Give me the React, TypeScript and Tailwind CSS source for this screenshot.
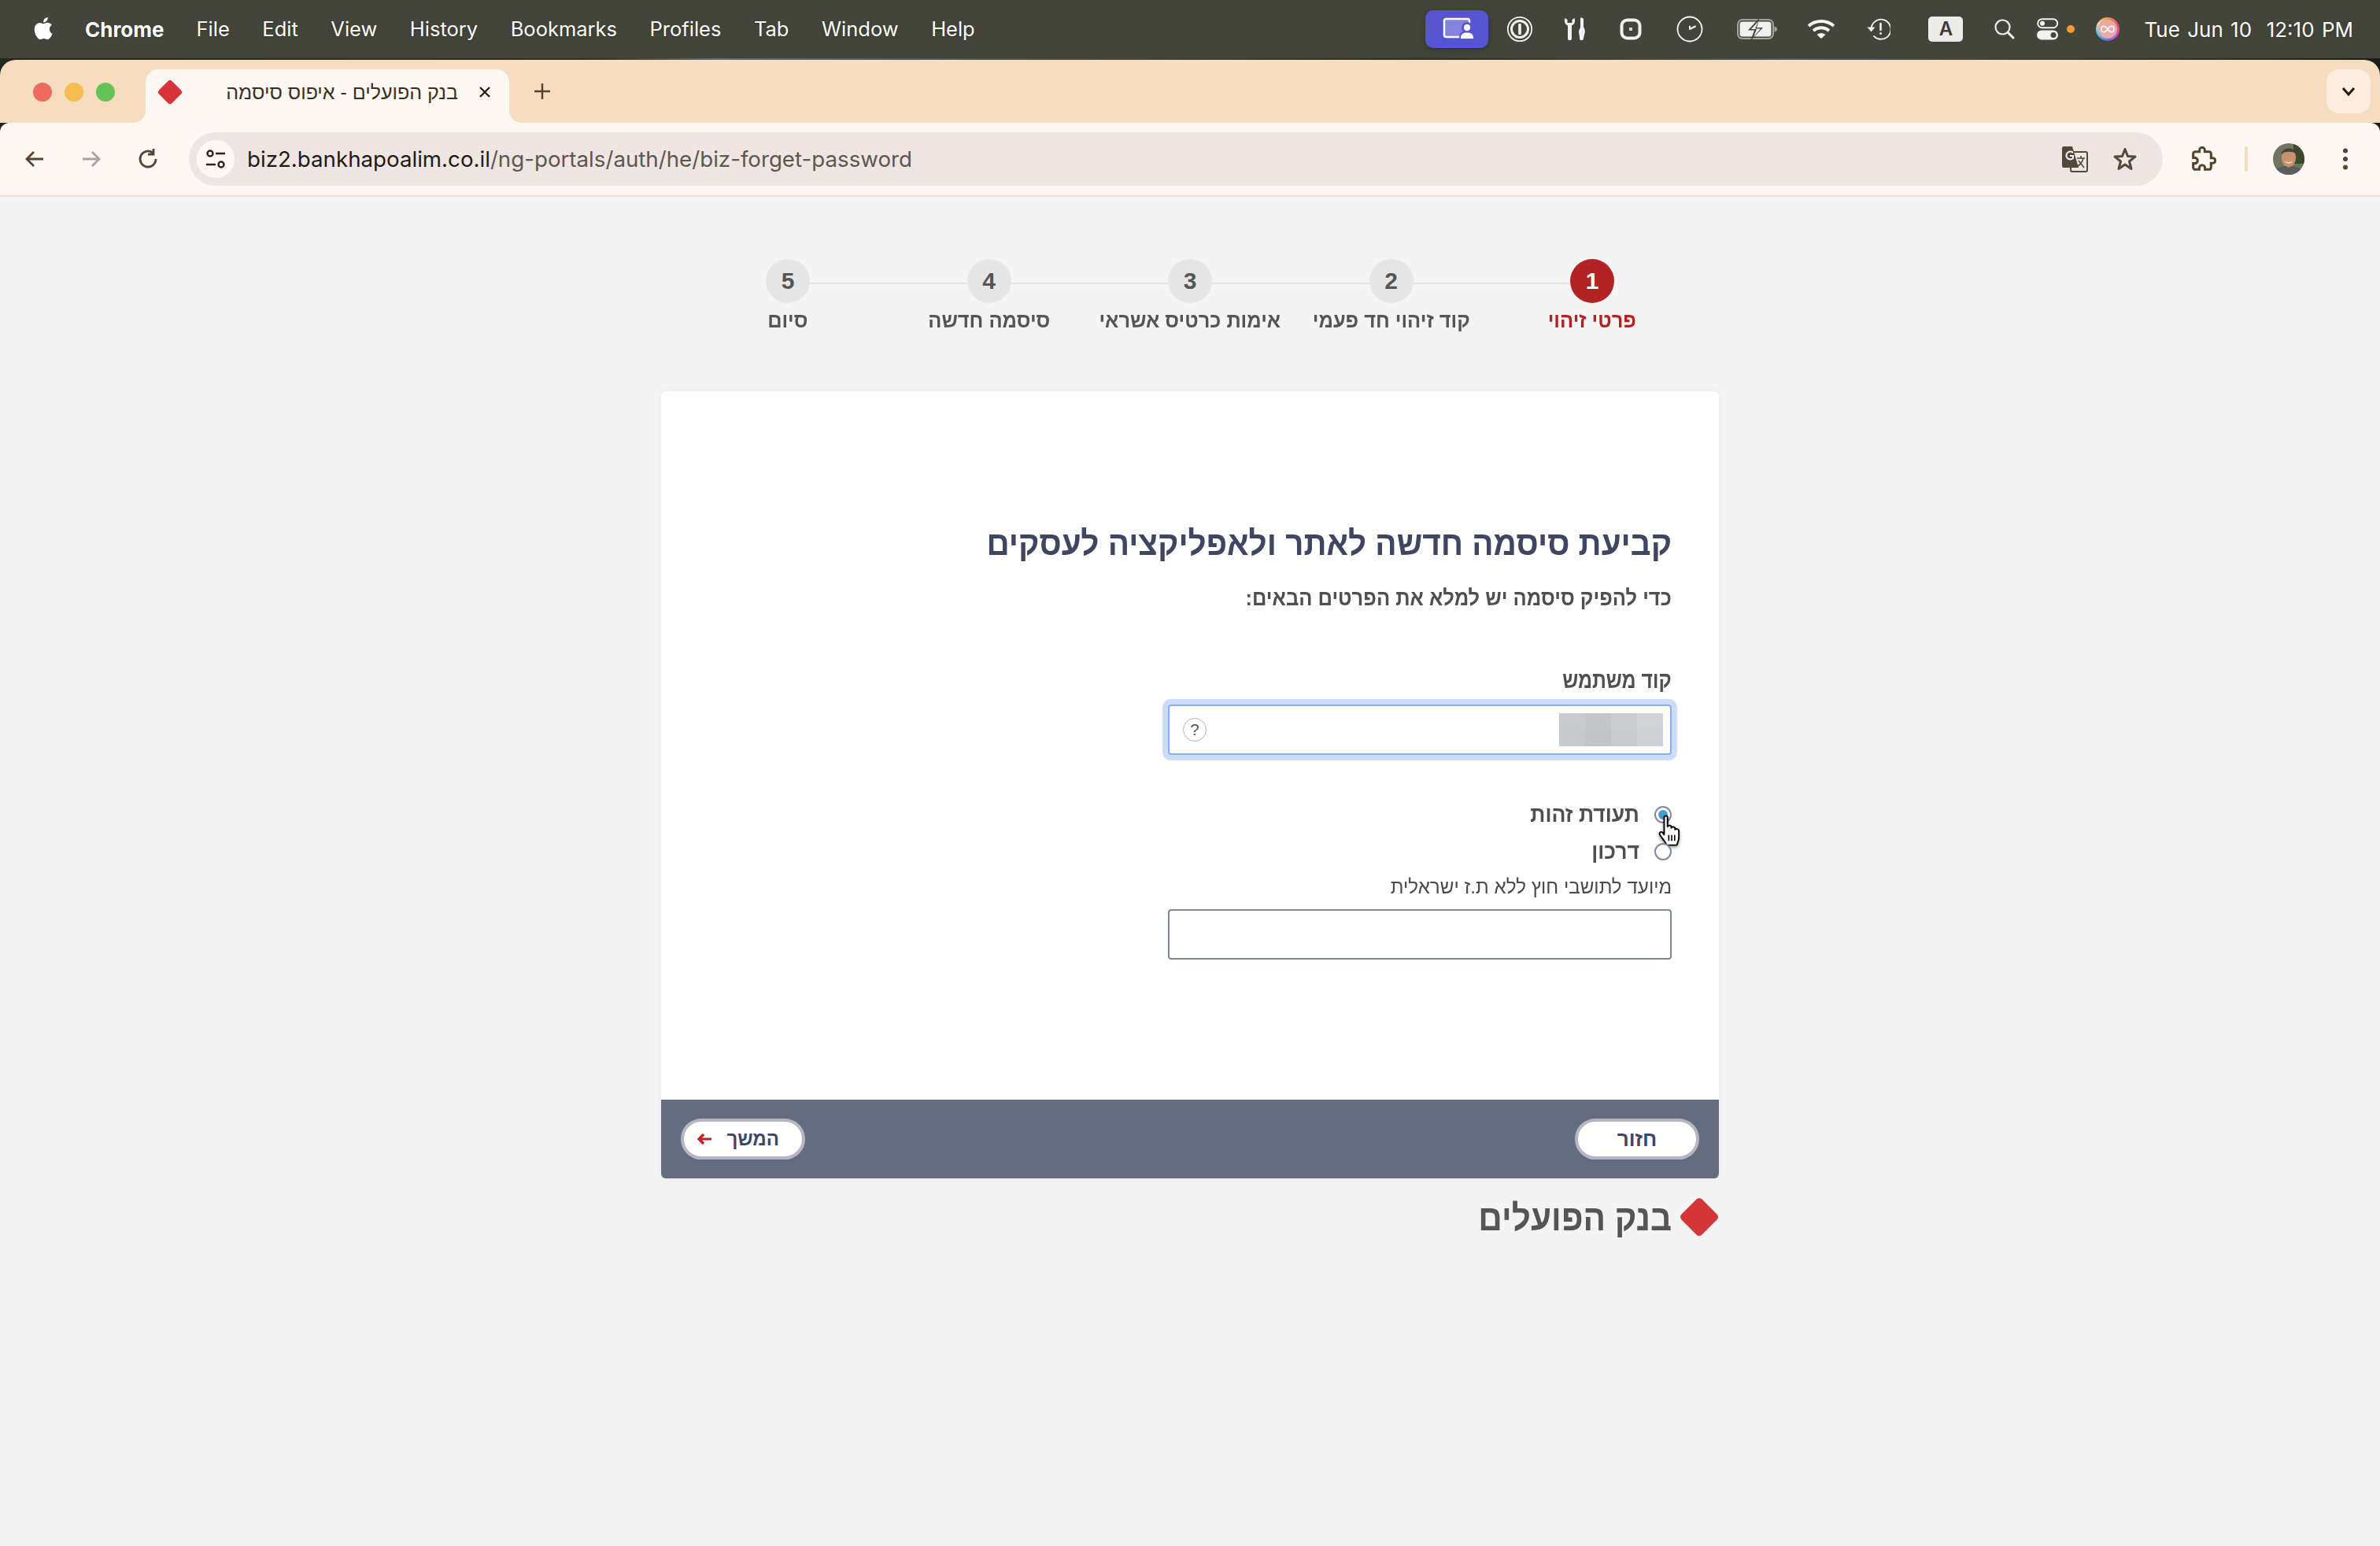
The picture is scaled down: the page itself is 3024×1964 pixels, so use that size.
const Diamond = ({ s, cls = "" }: { s: number; cls?: string }) => (
  <svg width={s} height={s} viewBox="0 0 50 50" className={cls}>
    <path d="M21.5 2.5 Q25 -0.5 28.5 2.5 L47.5 21.5 Q50.5 25 47.5 28.5 L28.5 47.5 Q25 50.5 21.5 47.5 L2.5 28.5 Q-0.5 25 2.5 21.5 Z" fill="#d43535" />
  </svg>
);

const Apple = () => (
  <svg width="28" height="34" viewBox="0 0 24 29" fill="#fff">
    <path d="M19.6 15.3c0-3 2.4-4.400 2.600-4.500-1.400-2.100-3.600-2.400-4.400-2.400-1.900-.2-3.600 1.100-4.600 1.100-.9 0-2.400-1.100-4-1.100-2 0-3.900 1.200-5 3-2.100 3.700-.5 9.200 1.500 12.200 1 1.500 2.200 3.100 3.800 3 1.500-.1 2.100-1 3.900-1 1.800 0 2.400 1 4 1 1.700 0 2.700-1.500 3.700-2.900 1.200-1.700 1.600-3.300 1.700-3.400-.1 0-3.200-1.300-3.200-5zM16.500 6.300c.8-1 1.400-2.400 1.200-3.800-1.200.1-2.600.8-3.500 1.800-.8.900-1.400 2.300-1.200 3.700 1.300.1 2.700-.7 3.500-1.700z" />
  </svg>
);

const Pill = () => (
  <div className="w-[80px] h-[48px] rounded-[10px] bg-[#5754d2] shadow-[0_2px_6px_rgba(0,0,0,0.3)]">
    <svg width="80" height="48" viewBox="0 0 80 48">
      <rect x="24" y="11" width="32" height="23" rx="2.500" fill="#8583e0" stroke="#fff" strokeWidth="2.500" />
      <circle cx="53" cy="22" r="7" fill="#5754d2" />
      <circle cx="53" cy="22" r="4.200" fill="#fff" />
      <path d="M44 36 C44 29 47 27.500 53 27.500 C59 27.500 61 29 61 36 Z" fill="#5754d2" stroke="#5754d2" strokeWidth="2" />
      <path d="M45 36 C45 30 48 28.500 53 28.500 C58 28.500 61 30 61 36 Z" fill="#fff" />
    </svg>
  </div>
);

const OneP = () => (
  <svg width="34" height="34" viewBox="0 0 34 34" fill="none" stroke="#f1f1ef">
    <circle cx="17" cy="17" r="15.200" strokeWidth="1.800" />
    <circle cx="17" cy="17" r="10.500" strokeWidth="3" />
    <rect x="15.200" y="10" width="3.600" height="14" rx="1" fill="#f1f1ef" stroke="none" />
  </svg>
);

const Tools = () => (
  <svg width="30" height="30" viewBox="0 0 30 30" fill="#f1f1ef">
    <path d="M1.500 1 C0 5 1.500 9 5 10.500 V27 C5 30 10 30 10 27 V10.500 C13.500 9 15 5 13.500 1 L10.500 3 V7 H4.500 V3 Z" />
    <path d="M21 0.500 C23.500 0.500 25 1 25 3 V12 C27 16 27.500 18 26 22 L25 27 C24.500 30 20 30 20 27 C20.500 24 19 22 19 18 C19 16 21 14 21 12 Z" />
  </svg>
);

const SquareDot = () => (
  <svg width="28" height="28" viewBox="0 0 28 28" fill="none">
    <rect x="2.500" y="2.500" width="23" height="23" rx="7" stroke="#f1f1ef" strokeWidth="4" />
    <rect x="12" y="12" width="4" height="4" fill="#d8d8d4" />
  </svg>
);

const Clock = () => (
  <svg width="34" height="34" viewBox="0 0 34 34" fill="none" stroke="#f6f6f4" strokeLinecap="round">
    <circle cx="17" cy="17" r="15.500" strokeWidth="1.800" />
    <path d="M17 17 V13.500 M17 17 L24 13.500" strokeWidth="2" />
  </svg>
);

const Battery = () => (
  <svg width="52" height="26" viewBox="0 0 52 26">
    <rect x="1" y="1" width="45" height="24" rx="6" fill="none" stroke="#a3a49a" strokeWidth="2" />
    <rect x="3.500" y="3.500" width="40" height="19" rx="3.500" fill="#f0f0ee" />
    <path d="M47.500 9.500 C50 10 51 11.500 51 13 C51 14.500 50 16 47.500 16.500 Z" fill="#a3a49a" />
    <path d="M29 -2 L14 14.500 H22 L17 28 L33 11 H25 Z" fill="#44463a" />
    <path d="M27 3 L18 13 H25 L21 23 L30 12.500 H23 Z" fill="#f0f0ee" />
  </svg>
);

const Wifi = () => (
  <svg width="36" height="26" viewBox="0 0 36 26" fill="none" stroke="#f6f6f4" strokeWidth="3.800">
    <path d="M2 9 C11 1 25 1 34 9" />
    <path d="M8 15 C14 10 22 10 28 15" />
    <path d="M18 25 L12.500 20 C15.500 17.500 20.500 17.500 23.500 20 Z" fill="#f6f6f4" stroke="none" />
  </svg>
);

const Backup = () => (
  <svg width="30" height="28" viewBox="0 0 30 28" fill="none" stroke="#f1f1ef">
    <path d="M5.500 13 A12.500 12.500 0 1 1 9 23" strokeWidth="1.800" strokeLinecap="round" />
    <path d="M0.500 11.500 H10.500 L5.500 17.500 Z" fill="#f1f1ef" stroke="none" />
    <path d="M17.500 7 V15" strokeWidth="2.600" strokeLinecap="round" />
    <circle cx="17.500" cy="19.500" r="1.500" fill="#f1f1ef" stroke="none" />
  </svg>
);

const Search = () => (
  <svg width="26" height="26" viewBox="0 0 26 26" fill="none" stroke="#f1f1ef" strokeLinecap="round">
    <circle cx="10.500" cy="10.500" r="9" strokeWidth="2.200" />
    <path d="M17.500 17.500 L24 24" strokeWidth="3" />
  </svg>
);

const Control = () => (
  <svg width="28" height="28" viewBox="0 0 28 28">
    <rect x="1.200" y="1.200" width="25" height="11" rx="5.500" fill="none" stroke="#f1f1ef" strokeWidth="2" />
    <circle cx="7" cy="6.700" r="3" fill="#f1f1ef" />
    <rect x="0" y="15.500" width="27" height="12" rx="6" fill="#f1f1ef" />
    <circle cx="21" cy="21.500" r="3.500" fill="#44463a" />
  </svg>
);

const Siri = () => (
  <div className="w-[30px] h-[30px] rounded-full bg-[conic-gradient(#f0a040,#f04f68,#d84cc8,#5f70f0,#4cc0ee,#e0d0a8,#f0a040)] flex items-center justify-center">
    <div className="w-[24px] h-[24px] rounded-full bg-[#e9a9a4] flex items-center justify-center">
      <svg width="20" height="14" viewBox="0 0 20 14" fill="none" stroke="#fff" strokeWidth="1.500">
        <path d="M10 7 C7 2 2 2 2 7 C2 12 7 12 10 7 C13 2 18 2 18 7 C18 12 13 12 10 7 Z" />
      </svg>
    </div>
  </div>
);

const Tab = () => (
  <div className="relative w-[462px] h-[68px] ml-[39px] pb-[10px] bg-[#fef8f3] rounded-t-[16px] flex items-center text-[#3b2f25]">
    <svg width="16" height="16" viewBox="0 0 16 16" className="absolute left-[-16px] bottom-0">
      <path d="M16 0 V16 H0 C9 16 16 9 16 0 Z" fill="#fef8f3" />
    </svg>
    <svg width="16" height="16" viewBox="0 0 16 16" className="absolute right-[-16px] bottom-0">
      <path d="M0 0 V16 H16 C7 16 0 9 0 0 Z" fill="#fef8f3" />
    </svg>
    <svg width="32" height="32" viewBox="0 0 32 32" className="ml-[15px] shrink-0">
      <path d="M14 1.500 Q16 0 18 1.500 L30.500 14 Q32 16 30.500 18 L18 30.500 Q16 32 14 30.500 L1.500 18 Q0 16 1.500 14 Z" fill="#d8323a" />
    </svg>
    <div dir="rtl" className="ml-[57px] w-[293px] text-[25px] leading-[30px] whitespace-nowrap font-['Liberation_Sans',sans-serif]">
      בנק הפועלים - איפוס סיסמה
    </div>
    <svg width="18" height="18" viewBox="0 0 18 18" className="ml-[25px]" stroke="#2a2119" strokeWidth="2.400" fill="none">
      <path d="M3 3 L15 15 M15 3 L3 15" />
    </svg>
  </div>
);

const ToolIcon = ({ d, cls = "", color = "#54432f" }: { d: string; cls?: string; color?: string }) => (
  <svg width="32" height="32" viewBox="0 0 32 32" fill="none" stroke={color} strokeWidth="2.800" className={cls}>
    <path d={d} />
  </svg>
);

const Browser = () => (
  <div className="bg-[linear-gradient(90deg,#1f2a1c,#3a2c1e_25%,#5a6c78_30%,#2a2a20_60%,#4a5860_75%,#1c1c16)] pt-[2px]">
    <div className="h-[80px] bg-[#f6ddbf] rounded-t-[20px] flex items-end relative">
      <div className="flex items-center gap-[16px] ml-[42px] h-[80px] pt-[2px]">
        <div className="w-[24px] h-[24px] rounded-full bg-[#ee6a5f]" />
        <div className="w-[24px] h-[24px] rounded-full bg-[#f5bd4f]" />
        <div className="w-[24px] h-[24px] rounded-full bg-[#61c454]" />
      </div>
      <Tab />
      <svg width="24" height="24" viewBox="0 0 24 24" stroke="#54432f" strokeWidth="2.400" className="ml-[30px] mb-[28px]">
        <path d="M12 2 V22 M2 12 H22" />
      </svg>
      <div className="ml-auto mr-[12px] mb-[12px] w-[56px] h-[56px] rounded-[16px] bg-[#fbeee0] flex items-center justify-center">
        <svg width="18" height="12" viewBox="0 0 18 12" fill="none" stroke="#241b12" strokeWidth="3">
          <path d="M2 2 L9 10 L16 2" />
        </svg>
      </div>
    </div>
    <div className="h-[92px] bg-[#fef8f3] rounded-t-[12px] flex items-center relative">
      <ToolIcon cls="ml-[28px]" d="M27 16 H6 M15 7 L6 16 L15 25" />
      <ToolIcon cls="ml-[40px]" color="#aaa49c" d="M5 16 H26 M17 7 L26 16 L17 25" />
      <ToolIcon cls="ml-[40px]" d="M26 16 A10 10 0 1 1 22 8 M23 3 V10 H16" />
      <div className="ml-[36px] w-[2508px] h-[68px] rounded-full bg-[#efe6e3] flex items-center">
        <div className="ml-[10px] w-[48px] h-[48px] rounded-full bg-[#fef8f3] flex items-center justify-center">
          <svg width="26" height="26" viewBox="0 0 26 26" fill="none" stroke="#2d241b" strokeWidth="2.400">
            <circle cx="6" cy="6" r="3.500" />
            <path d="M13 6 H25 M1 20 H13" />
            <circle cx="20" cy="20" r="3.500" />
          </svg>
        </div>
        <div className="ml-[16px] text-[27.7px] leading-[36px] text-[#1f1a16] font-['Inter',sans-serif] whitespace-nowrap">
          biz2.bankhapoalim.co.il<span className="text-[#5f5650]">/ng-portals/auth/he/biz-forget-password</span>
        </div>
        <svg width="34" height="34" viewBox="0 0 34 34" className="ml-auto">
          <rect x="12" y="8" width="21" height="25" rx="2" fill="none" stroke="#54473b" strokeWidth="2" />
          <path d="M3 1 H14 L22 28 H3 Q1 28 1 26 V3 Q1 1 3 1 Z" fill="#54473b" />
          <path d="M15 9 A5 5 0 1 0 15 16 V13 H11" fill="none" stroke="#fff" strokeWidth="2" />
          <path d="M20 16 H30 M25 13 V16 M28 16 C27 21 24 24 21 26 M22 19 L29 28" fill="none" stroke="#54473b" strokeWidth="1.600" />
        </svg>
        <svg width="32" height="32" viewBox="0 0 32 32" fill="none" stroke="#54473b" strokeWidth="3" className="ml-[31px] mr-[32px]">
          <path d="M16 3.500 L19.500 12.500 L29 13 L21.500 19 L24 28.500 L16 23 L8 28.500 L10.500 19 L3 13 L12.500 12.500 Z" strokeLinejoin="round" />
        </svg>
      </div>
      <svg width="32" height="32" viewBox="0 0 24 24" fill="none" stroke="#54432f" strokeWidth="2.300" className="ml-[36px]">
        <path d="M20.500 11H19V7c0-1.100-.9-2-2-2h-4V3.500C13 2.120 11.880 1 10.500 1S8 2.120 8 3.500V5H4c-1.100 0-1.990.9-1.990 2v3.800H3.500c1.490 0 2.700 1.210 2.700 2.700s-1.210 2.700-2.700 2.700H2V20c0 1.100.9 2 2 2h3.800v-1.500c0-1.490 1.210-2.700 2.700-2.700 1.490 0 2.700 1.210 2.700 2.700V22H17c1.100 0 2-.9 2-2v-4h1.500c1.380 0 2.500-1.120 2.500-2.500S21.880 11 20.500 11z" />
      </svg>
      <div className="ml-[36px] w-[4px] h-[32px] rounded-full bg-[#f6ddbf]" />
      <svg width="40" height="40" viewBox="0 0 40 40" className="ml-[32px] rounded-full">
        <rect width="40" height="40" fill="#6f7660" />
        <rect x="26" y="0" width="14" height="26" fill="#3c4a2c" />
        <path d="M11 18 C10 6 30 6 29 18 C29 26 25 30 20 30 C15 30 11 26 11 18 Z" fill="#c8926f" />
        <path d="M11 15 C10 4 30 4 29 13 C25 10 16 10 12 13 Z" fill="#4c4038" />
        <path d="M15 22 C18 25 22 25 25 22 L24 24 C21 26 19 26 16 24 Z" fill="#f4ead8" />
        <path d="M0 40 V36 C6 30 12 30 16 29 L20 32 L24 29 C28 30 34 30 40 36 V40 Z" fill="#5b5c5f" />
      </svg>
      <svg width="8" height="28" viewBox="0 0 8 28" fill="#54432f" className="ml-[48px]">
        <circle cx="4" cy="3.500" r="3" />
        <circle cx="4" cy="14" r="3" />
        <circle cx="4" cy="24.500" r="3" />
      </svg>
    </div>
    <div className="h-[2px] bg-[#f2e0d2]" />
  </div>
);

const MenuBar = () => (
  <div className="h-[74px] bg-[#44453a] flex items-center text-white font-['Inter',sans-serif] text-[26px] [text-shadow:0_1px_3px_rgba(0,0,0,0.3)]">
    <div className="ml-[40px] mb-[2px]"><Apple /></div>
    <div className="ml-[40px] font-bold">Chrome</div>
    <div className="ml-[41px] flex gap-[41.500px] text-[25.500px]">
      <span>File</span>
      <span>Edit</span>
      <span>View</span>
      <span>History</span>
      <span>Bookmarks</span>
      <span>Profiles</span>
      <span>Tab</span>
      <span>Window</span>
      <span>Help</span>
    </div>
    <div className="ml-auto flex items-center mr-[34px]">
      <Pill />
      <div className="ml-[23px]"><OneP /></div>
      <div className="ml-[39px]"><Tools /></div>
      <div className="ml-[41px]"><SquareDot /></div>
      <div className="ml-[44px]"><Clock /></div>
      <div className="ml-[43px]"><Battery /></div>
      <div className="ml-[37px]"><Wifi /></div>
      <div className="ml-[40px]"><Backup /></div>
      <div className="ml-[48px] w-[44px] h-[32px] rounded-[5px] bg-[#ececea] text-[#3d3d3a] text-[24px] font-semibold flex items-center justify-center [text-shadow:none]">A</div>
      <div className="ml-[40px]"><Search /></div>
      <div className="ml-[28px]"><Control /></div>
      <div className="ml-[10px] w-[10px] h-[10px] rounded-full bg-[#f29c38]" />
      <div className="ml-[27px]"><Siri /></div>
      <div className="ml-[31px] whitespace-pre [word-spacing:2px]">Tue Jun 10  12:10 PM</div>
    </div>
  </div>
);

const steps = ["פרטי זיהוי", "קוד זיהוי חד פעמי", "אימות כרטיס אשראי", "סיסמה חדשה", "סיום"];

const Stepper = () => (
  <div dir="rtl" className="h-[247px] pt-[79px] flex flex-col items-center">
    <div className="w-[1078px] flex items-center">
      {steps.map((_, i) => (
        <div key={i} className="contents">
          <div className={i === 0 ? "w-[56px] h-[56px] pb-[2px] shrink-0 rounded-full bg-[#b12325] text-white flex items-center justify-center text-[30px] font-bold" : "w-[56px] h-[56px] pb-[2px] shrink-0 rounded-full bg-[#e6e6e6] text-[#555] flex items-center justify-center text-[30px] font-bold"}>
            {i + 1}
          </div>
          {i < 4 && <div className="flex-1 h-[2px] mt-[5px] bg-[#e4e4e4]" />}
        </div>
      ))}
    </div>
    <div className="w-[1278px] grid grid-cols-5 mt-[4px]">
      {steps.map((s, i) => (
        <div key={s} className={i === 0 ? "text-center text-[27px] scale-x-[0.94] leading-[36px] font-bold text-[#b12325] whitespace-nowrap" : "text-center text-[27px] scale-x-[0.94] leading-[36px] font-bold text-[#555] whitespace-nowrap"}>
          {s}
        </div>
      ))}
    </div>
  </div>
);

const Hand = () => (
  <svg width="32" height="41" viewBox="0 0 30 38" className="absolute right-[-15px] top-[24px] drop-shadow-[0_2px_2px_rgba(0,0,0,0.4)]" stroke="#000" strokeWidth="1.800" fill="#fff">
    <path d="M7 3 C7 .5 11 .5 11 3 V14 C11.500 12 15.500 12 15.500 14.500 V15.500 C16 13.500 20 14 20 16.500 V17.500 C20.500 16 24.500 16.500 24.500 19 V27 C24.500 31 23 33 22 36 H10 C9 33 6 30 2 24 C.5 21.500 3 19 5 21 L7 23.500 Z" strokeLinejoin="round" />
    <path d="M12.500 24 V31 M16 24 V31 M19.500 24 V31" fill="none" strokeWidth="1.500" />
  </svg>
);

const Radio = ({ label, on }: { label: string; on?: boolean }) => (
  <div className="h-[47px] flex items-center gap-[19px] relative">
    <div className="w-[22px] h-[22px] rounded-full border-2 border-[#7f8aa0] bg-white flex items-center justify-center">
      {on && <div className="w-[12px] h-[12px] rounded-full bg-[#479cd6]" />}
    </div>
    <span className="text-[28px] scale-x-[0.95] origin-right font-bold text-[#4f4f4f]">{label}</span>
    {on && <Hand />}
  </div>
);

const blur = ["bg-[#d3d4d7]", "bg-[#cbccd0]", "bg-[#c5c6ca]", "bg-[#c9cacd]", "bg-[#cfd0d3]", "bg-[#c9cace]", "bg-[#c3c4c8]", "bg-[#c8c9cc]"];

const Card = () => (
  <div dir="rtl" className="w-[1344px] rounded-[6px] overflow-hidden shadow-[0_0_8px_rgba(0,0,0,0.06)] bg-white">
    <div className="h-[900px] pt-[165px] px-[60px] flex flex-col items-start">
      <h1 className="h-[56px] leading-[56px] text-[43px] scale-x-[0.94] origin-right font-bold text-[#3f4661] whitespace-nowrap">קביעת סיסמה חדשה לאתר ולאפליקציה לעסקים</h1>
      <p className="mt-[22px] h-[40px] leading-[40px] text-[28px] scale-x-[0.91] origin-right font-bold text-[#4f4f4f]">כדי להפיק סיסמה יש למלא את הפרטים הבאים:</p>
      <label className="mt-[66px] h-[36px] leading-[36px] text-[29px] scale-x-[0.857] origin-right font-bold text-[#4f4f4f]">קוד משתמש</label>
      <div className="mt-[13px] w-[640px] h-[64px] rounded-[4px] border-2 border-[#88b0f5] bg-white shadow-[0_0_0_7px_#ccdcfa] flex items-center justify-between pr-[9px] pl-[17px]">
        <div className="grid grid-cols-4 w-[132px] h-[42px]">
          {blur.map((c) => (
            <div key={c} className={c} />
          ))}
        </div>
        <div className="w-[30px] h-[30px] rounded-full border border-[#b4b4b8] text-[20px] text-[#555] flex items-center justify-center">?</div>
      </div>
      <div className="mt-[52px] flex flex-col">
        <Radio label="תעודת זהות" on />
        <Radio label="דרכון" />
      </div>
      <p className="mt-[5px] h-[32px] leading-[32px] text-[25px] scale-x-[0.968] origin-right text-[#4a4a4a]">מיועד לתושבי חוץ ללא ת.ז ישראלית</p>
      <div className="mt-[13px] w-[640px] h-[64px] rounded-[4px] border-2 border-[#7f8799] bg-white" />
    </div>
    <div className="h-[100px] bg-[#666c80] px-[25px] flex items-center justify-between">
      <button className="w-[158px] h-[52px] rounded-full bg-white border-[4px] border-[#b3b7c4] text-[#3f4661] text-[26px] font-bold">חזור</button>
      <button className="w-[158px] h-[52px] rounded-full bg-white border-[4px] border-[#b3b7c4] text-[#3f4661] text-[24px] font-bold flex items-center gap-[18px] pr-[29px]">
        <span>המשך</span>
        <svg width="20" height="16" viewBox="0 0 20 16" fill="none" stroke="#bf2126" strokeWidth="3.200">
          <path d="M19 8 H3 M9 2 L3 8 L9 14" />
        </svg>
      </button>
    </div>
  </div>
);

export default function App() {
  return (
    <div className="w-[3024px] h-[1964px] overflow-hidden bg-[#f4f4f4] font-['Liberation_Sans',sans-serif]">
      <MenuBar />
      <Browser />
      <Stepper />
      <div className="flex flex-col items-center">
        <Card />
        <div dir="rtl" className="w-[1344px] mt-[22px] flex items-center gap-[10px]">
          <Diamond s={50} />
          <span className="text-[46px] scale-x-[0.92] origin-right mt-[3px] leading-[50px] font-bold text-[#555553]">בנק הפועלים</span>
        </div>
      </div>
    </div>
  );
}
